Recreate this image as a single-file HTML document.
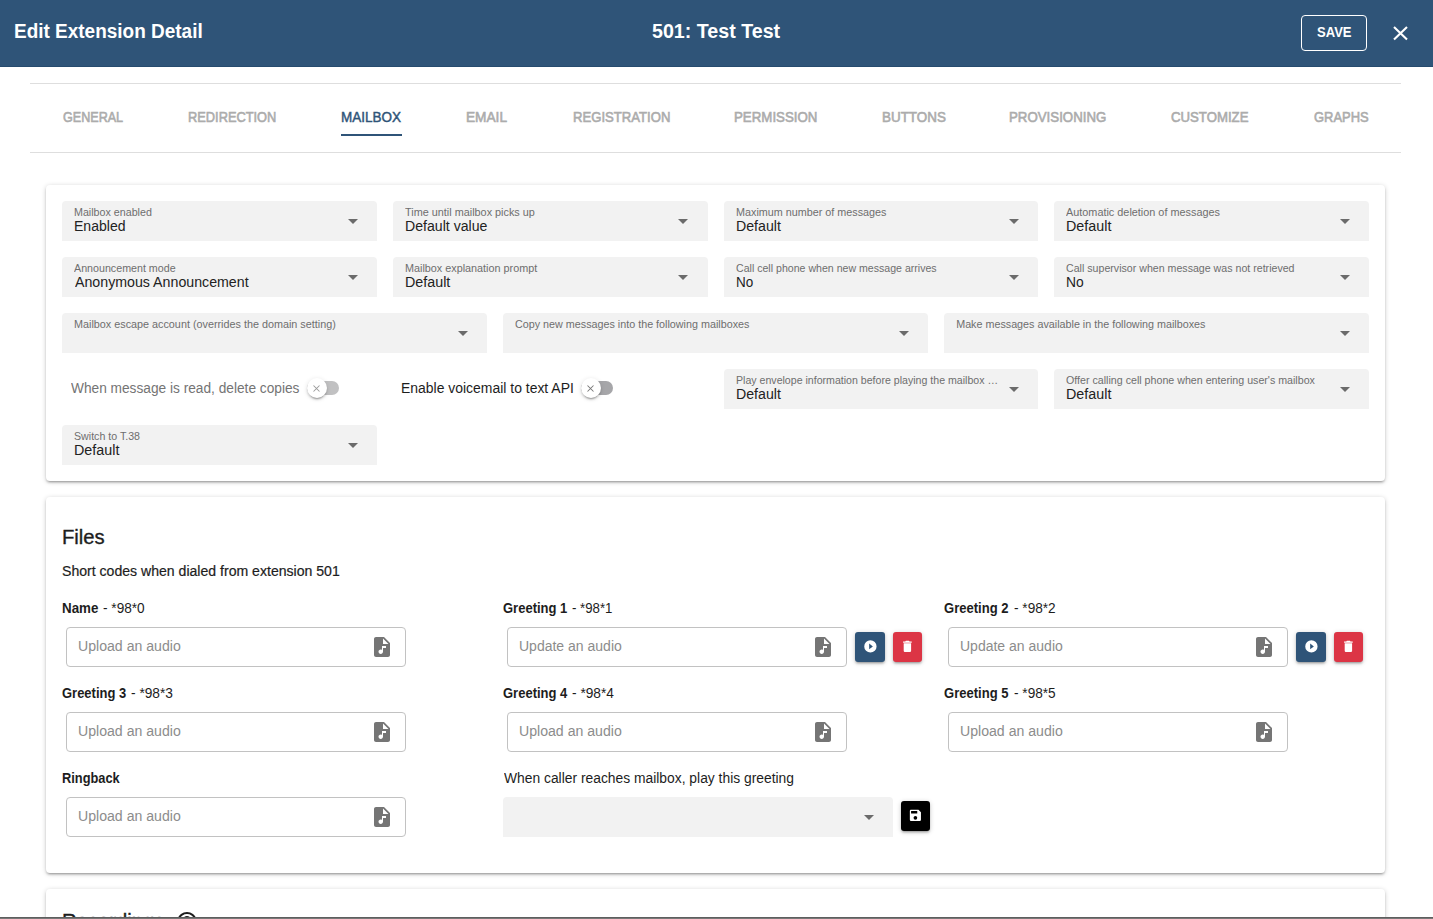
<!DOCTYPE html>
<html><head><meta charset="utf-8"><title>Edit Extension Detail</title>
<style>
*{box-sizing:border-box;margin:0;padding:0}
html,body{width:1433px;height:919px;overflow:hidden;background:#fff;font-family:"Liberation Sans",sans-serif}
#root{position:relative;width:1433px;height:919px;overflow:hidden;background:#fff}
.a{position:absolute}
.t{position:absolute;white-space:nowrap;transform-origin:0 0;font-family:"Liberation Sans",sans-serif}
.hdr{left:0;top:0;width:1433px;height:67px;background:#2f5478;border-bottom:1px solid #264b6e}
.save{left:1301px;top:15px;width:66px;height:36px;border:1px solid #fff;border-radius:4px}
.line{left:30px;width:1371px;height:1px;background:#dedede}
.ind{left:341px;top:134px;width:61px;height:2px;background:#2f5478}
.card{background:#fff;border-radius:4px;box-shadow:0 1px 5px rgba(0,0,0,.2),0 2px 2px rgba(0,0,0,.14),0 3px 1px -2px rgba(0,0,0,.12)}
.sel{height:40px;background:#f2f2f2;border-radius:4px 4px 0 0}
.arr{width:24px;height:24px}
.arr path{fill:#6b6b6b}
.inp{height:40px;border:1px solid #c2c2c2;border-radius:4px;background:#fff}
.fi{width:24px;height:24px}
.fi path{fill:#757575}
.btn{height:30px;border-radius:3px;box-shadow:0 1px 5px rgba(0,0,0,.2),0 2px 2px rgba(0,0,0,.14),0 3px 1px -2px rgba(0,0,0,.12)}
.btn svg{position:absolute;width:14.8px;height:14.8px;left:50%;top:50%;margin:-8.4px 0 0 -7.4px}
.btn path{fill:#fff}
.track{width:32px;height:14px;border-radius:7px}
.thumb{width:20px;height:20px;border-radius:50%;background:#fff;box-shadow:0 3px 1px -2px rgba(0,0,0,.2),0 2px 2px rgba(0,0,0,.14),0 1px 5px rgba(0,0,0,.12)}
.thumb svg{position:absolute;left:6.5px;top:6.5px;width:7px;height:7px}
</style></head><body><div id="root">
<!-- header -->
<div class="a hdr"></div>
<div class="a save"></div>
<svg class="a" style="left:1391px;top:24px;width:19px;height:19px" viewBox="0 0 19 19"><path d="M3 2.9 L16 15.5 M16 2.9 L3 15.5" stroke="#fff" stroke-width="2.1" fill="none"/></svg>
<!--HTEXTS-->
<!-- tabs -->
<div class="a line" style="top:83px"></div>
<div class="a line" style="top:152px"></div>
<div class="a ind"></div>

<!-- card 1 -->
<div class="a card" style="left:46px;top:185px;width:1339px;height:296px"></div>
<div class="a sel" style="left:62px;top:201px;width:314.75px"></div>
<svg class="a arr" style="left:340.55px;top:209.4px" viewBox="0 0 24 24"><path d="M7,10L12,15L17,10H7Z"/></svg>
<div class="a sel" style="left:392.75px;top:201px;width:314.75px"></div>
<svg class="a arr" style="left:671.3px;top:209.4px" viewBox="0 0 24 24"><path d="M7,10L12,15L17,10H7Z"/></svg>
<div class="a sel" style="left:723.5px;top:201px;width:314.75px"></div>
<svg class="a arr" style="left:1002.05px;top:209.4px" viewBox="0 0 24 24"><path d="M7,10L12,15L17,10H7Z"/></svg>
<div class="a sel" style="left:1054.25px;top:201px;width:314.75px"></div>
<svg class="a arr" style="left:1332.8px;top:209.4px" viewBox="0 0 24 24"><path d="M7,10L12,15L17,10H7Z"/></svg>
<div class="a sel" style="left:62px;top:257px;width:314.75px"></div>
<svg class="a arr" style="left:340.55px;top:265.4px" viewBox="0 0 24 24"><path d="M7,10L12,15L17,10H7Z"/></svg>
<div class="a sel" style="left:392.75px;top:257px;width:314.75px"></div>
<svg class="a arr" style="left:671.3px;top:265.4px" viewBox="0 0 24 24"><path d="M7,10L12,15L17,10H7Z"/></svg>
<div class="a sel" style="left:723.5px;top:257px;width:314.75px"></div>
<svg class="a arr" style="left:1002.05px;top:265.4px" viewBox="0 0 24 24"><path d="M7,10L12,15L17,10H7Z"/></svg>
<div class="a sel" style="left:1054.25px;top:257px;width:314.75px"></div>
<svg class="a arr" style="left:1332.8px;top:265.4px" viewBox="0 0 24 24"><path d="M7,10L12,15L17,10H7Z"/></svg>
<div class="a sel" style="left:62px;top:313px;width:425px"></div>
<svg class="a arr" style="left:450.8px;top:321.4px" viewBox="0 0 24 24"><path d="M7,10L12,15L17,10H7Z"/></svg>
<div class="a sel" style="left:503px;top:313px;width:425px"></div>
<svg class="a arr" style="left:891.8px;top:321.4px" viewBox="0 0 24 24"><path d="M7,10L12,15L17,10H7Z"/></svg>
<div class="a sel" style="left:944px;top:313px;width:425px"></div>
<svg class="a arr" style="left:1332.8px;top:321.4px" viewBox="0 0 24 24"><path d="M7,10L12,15L17,10H7Z"/></svg>
<div class="a sel" style="left:723.5px;top:369px;width:314.75px"></div>
<svg class="a arr" style="left:1002.05px;top:377.4px" viewBox="0 0 24 24"><path d="M7,10L12,15L17,10H7Z"/></svg>
<div class="a sel" style="left:1054.25px;top:369px;width:314.75px"></div>
<svg class="a arr" style="left:1332.8px;top:377.4px" viewBox="0 0 24 24"><path d="M7,10L12,15L17,10H7Z"/></svg>
<div class="a sel" style="left:62px;top:425px;width:314.75px"></div>
<svg class="a arr" style="left:340.55px;top:433.4px" viewBox="0 0 24 24"><path d="M7,10L12,15L17,10H7Z"/></svg>
<div class="a track" style="left:307px;top:381px;background:#c1c1c2"></div>
<div class="a thumb" style="left:306.8px;top:378.2px"><svg viewBox="0 0 7 7"><path d="M0.5 0.5L6.5 6.5M6.5 0.5L0.5 6.5" stroke="#9a9a9a" stroke-width="1.05" fill="none"/></svg></div>
<div class="a track" style="left:581px;top:381px;background:#a6a6a9"></div>
<div class="a thumb" style="left:580.8px;top:378.2px"><svg viewBox="0 0 7 7"><path d="M0.5 0.5L6.5 6.5M6.5 0.5L0.5 6.5" stroke="#777" stroke-width="1.05" fill="none"/></svg></div>
<!-- card 2 -->
<div class="a card" style="left:46px;top:497px;width:1339px;height:376px"></div>
<!-- card 3 -->
<div class="a card" style="left:46px;top:889px;width:1339px;height:200px"></div>
<div class="a inp" style="left:66px;top:627px;width:340px"></div>
<svg class="a fi" style="left:370px;top:635px" viewBox="0 0 24 24"><path d="M14 2H6c-1.1 0-2 .9-2 2v16c0 1.1.9 2 2 2h12c1.1 0 2-.9 2-2V8l-6-6zm2 11h-3v3.75c0 1.24-1.01 2.25-2.25 2.25S8.5 17.99 8.5 16.75s1.01-2.25 2.25-2.25c.46 0 .89.14 1.25.38V11h4v2zm-3-4V3.5L18.5 9H13z"/></svg>
<div class="a inp" style="left:507px;top:627px;width:340px"></div>
<svg class="a fi" style="left:811px;top:635px" viewBox="0 0 24 24"><path d="M14 2H6c-1.1 0-2 .9-2 2v16c0 1.1.9 2 2 2h12c1.1 0 2-.9 2-2V8l-6-6zm2 11h-3v3.75c0 1.24-1.01 2.25-2.25 2.25S8.5 17.99 8.5 16.75s1.01-2.25 2.25-2.25c.46 0 .89.14 1.25.38V11h4v2zm-3-4V3.5L18.5 9H13z"/></svg>
<div class="a inp" style="left:948px;top:627px;width:340px"></div>
<svg class="a fi" style="left:1252px;top:635px" viewBox="0 0 24 24"><path d="M14 2H6c-1.1 0-2 .9-2 2v16c0 1.1.9 2 2 2h12c1.1 0 2-.9 2-2V8l-6-6zm2 11h-3v3.75c0 1.24-1.01 2.25-2.25 2.25S8.5 17.99 8.5 16.75s1.01-2.25 2.25-2.25c.46 0 .89.14 1.25.38V11h4v2zm-3-4V3.5L18.5 9H13z"/></svg>
<div class="a inp" style="left:66px;top:712px;width:340px"></div>
<svg class="a fi" style="left:370px;top:720px" viewBox="0 0 24 24"><path d="M14 2H6c-1.1 0-2 .9-2 2v16c0 1.1.9 2 2 2h12c1.1 0 2-.9 2-2V8l-6-6zm2 11h-3v3.75c0 1.24-1.01 2.25-2.25 2.25S8.5 17.99 8.5 16.75s1.01-2.25 2.25-2.25c.46 0 .89.14 1.25.38V11h4v2zm-3-4V3.5L18.5 9H13z"/></svg>
<div class="a inp" style="left:507px;top:712px;width:340px"></div>
<svg class="a fi" style="left:811px;top:720px" viewBox="0 0 24 24"><path d="M14 2H6c-1.1 0-2 .9-2 2v16c0 1.1.9 2 2 2h12c1.1 0 2-.9 2-2V8l-6-6zm2 11h-3v3.75c0 1.24-1.01 2.25-2.25 2.25S8.5 17.99 8.5 16.75s1.01-2.25 2.25-2.25c.46 0 .89.14 1.25.38V11h4v2zm-3-4V3.5L18.5 9H13z"/></svg>
<div class="a inp" style="left:948px;top:712px;width:340px"></div>
<svg class="a fi" style="left:1252px;top:720px" viewBox="0 0 24 24"><path d="M14 2H6c-1.1 0-2 .9-2 2v16c0 1.1.9 2 2 2h12c1.1 0 2-.9 2-2V8l-6-6zm2 11h-3v3.75c0 1.24-1.01 2.25-2.25 2.25S8.5 17.99 8.5 16.75s1.01-2.25 2.25-2.25c.46 0 .89.14 1.25.38V11h4v2zm-3-4V3.5L18.5 9H13z"/></svg>
<div class="a inp" style="left:66px;top:797px;width:340px"></div>
<svg class="a fi" style="left:370px;top:805px" viewBox="0 0 24 24"><path d="M14 2H6c-1.1 0-2 .9-2 2v16c0 1.1.9 2 2 2h12c1.1 0 2-.9 2-2V8l-6-6zm2 11h-3v3.75c0 1.24-1.01 2.25-2.25 2.25S8.5 17.99 8.5 16.75s1.01-2.25 2.25-2.25c.46 0 .89.14 1.25.38V11h4v2zm-3-4V3.5L18.5 9H13z"/></svg>
<div class="a btn" style="left:855px;top:632px;width:30px;background:#2f5478"><svg viewBox="0 0 24 24"><path d="M10,16.5V7.5L16,12M12,2A10,10 0 0,0 2,12A10,10 0 0,0 12,22A10,10 0 0,0 22,12A10,10 0 0,0 12,2Z"/></svg></div>
<div class="a btn" style="left:1296px;top:632px;width:30px;background:#2f5478"><svg viewBox="0 0 24 24"><path d="M10,16.5V7.5L16,12M12,2A10,10 0 0,0 2,12A10,10 0 0,0 12,22A10,10 0 0,0 22,12A10,10 0 0,0 12,2Z"/></svg></div>
<div class="a btn" style="left:893px;top:632px;width:29px;background:#dc3545"><svg viewBox="0 0 24 24"><path d="M19,4H15.5L14.5,3H9.5L8.5,4H5V6H19M6,19A2,2 0 0,0 8,21H16A2,2 0 0,0 18,19V7H6V19Z"/></svg></div>
<div class="a btn" style="left:1334px;top:632px;width:29px;background:#dc3545"><svg viewBox="0 0 24 24"><path d="M19,4H15.5L14.5,3H9.5L8.5,4H5V6H19M6,19A2,2 0 0,0 8,21H16A2,2 0 0,0 18,19V7H6V19Z"/></svg></div>
<div class="a sel" style="left:503px;top:797px;width:390px"></div>
<svg class="a arr" style="left:856.8px;top:805.2px" viewBox="0 0 24 24"><path d="M7,10L12,15L17,10H7Z"/></svg>
<div class="a btn" style="left:901px;top:801px;width:29px;background:#000"><svg viewBox="0 0 24 24"><path d="M15,9H5V5H15M12,19A3,3 0 0,1 9,16A3,3 0 0,1 12,13A3,3 0 0,1 15,16A3,3 0 0,1 12,19M17,3H5C3.89,3 3,3.9 3,5V19A2,2 0 0,0 5,21H19A2,2 0 0,0 21,19V7L17,3Z"/></svg></div>
<svg class="a" style="left:174.9px;top:910.4px;width:24px;height:24px" viewBox="0 0 24 24"><path fill="#1d1d1d" d="M11 18h2v-2h-2v2zm1-16C6.48 2 2 6.48 2 12s4.48 10 10 10 10-4.48 10-10S17.52 2 12 2zm0 18c-4.41 0-8-3.59-8-8s3.59-8 8-8 8 3.59 8 8-3.59 8-8 8zm0-14c-2.21 0-4 1.79-4 4h2c0-1.1.9-2 2-2s2 .9 2 2c0 2-3 1.75-3 5h2c0-2.25 3-2.5 3-5 0-2.21-1.79-4-4-4z"/></svg>

<div class="t" style="left:13.85px;top:21.27px;font-size:20px;line-height:20px;transform:scaleX(0.9485);color:#fff;font-weight:bold;">Edit Extension Detail</div>
<div class="t" style="left:651.80px;top:21.17px;font-size:20px;line-height:20px;transform:scaleX(0.9827);color:#fff;font-weight:bold;">501: Test Test</div>
<div class="t" style="left:1317.10px;top:25.15px;font-size:14px;line-height:14px;transform:scaleX(0.9307);color:#fff;font-weight:bold;">SAVE</div>
<div class="t" style="left:62.70px;top:110.05px;font-size:14px;line-height:14px;transform:scaleX(0.8983);color:#acacac;-webkit-text-stroke:0.6px;">GENERAL</div>
<div class="t" style="left:188.48px;top:110.05px;font-size:14px;line-height:14px;transform:scaleX(0.9159);color:#acacac;-webkit-text-stroke:0.6px;">REDIRECTION</div>
<div class="t" style="left:340.84px;top:110.05px;font-size:14px;line-height:14px;transform:scaleX(0.9628);color:#2f5478;-webkit-text-stroke:0.45px;">MAILBOX</div>
<div class="t" style="left:466.42px;top:110.05px;font-size:14px;line-height:14px;transform:scaleX(0.9751);color:#acacac;-webkit-text-stroke:0.6px;">EMAIL</div>
<div class="t" style="left:572.56px;top:110.05px;font-size:14px;line-height:14px;transform:scaleX(0.9366);color:#acacac;-webkit-text-stroke:0.6px;">REGISTRATION</div>
<div class="t" style="left:734.35px;top:110.05px;font-size:14px;line-height:14px;transform:scaleX(0.9488);color:#acacac;-webkit-text-stroke:0.6px;">PERMISSION</div>
<div class="t" style="left:881.74px;top:110.05px;font-size:14px;line-height:14px;transform:scaleX(0.9587);color:#acacac;-webkit-text-stroke:0.6px;">BUTTONS</div>
<div class="t" style="left:1009.35px;top:110.05px;font-size:14px;line-height:14px;transform:scaleX(0.9475);color:#acacac;-webkit-text-stroke:0.6px;">PROVISIONING</div>
<div class="t" style="left:1171.10px;top:110.05px;font-size:14px;line-height:14px;transform:scaleX(0.9420);color:#acacac;-webkit-text-stroke:0.6px;">CUSTOMIZE</div>
<div class="t" style="left:1313.80px;top:110.05px;font-size:14px;line-height:14px;transform:scaleX(0.9237);color:#acacac;-webkit-text-stroke:0.6px;">GRAPHS</div>
<div class="t" style="left:74.20px;top:207.00px;font-size:10.75px;line-height:10.75px;transform:scaleX(0.9948);color:#6e6e6e;">Mailbox enabled</div>
<div class="t" style="left:74.10px;top:218.95px;font-size:14px;line-height:14px;transform:scaleX(1.0022);color:#222222;">Enabled</div>
<div class="t" style="left:405.20px;top:207.00px;font-size:10.75px;line-height:10.75px;transform:scaleX(1.0096);color:#6e6e6e;">Time until mailbox picks up</div>
<div class="t" style="left:405.09px;top:218.95px;font-size:14px;line-height:14px;transform:scaleX(1.0083);color:#222222;">Default value</div>
<div class="t" style="left:736.20px;top:207.00px;font-size:10.75px;line-height:10.75px;transform:scaleX(1.0035);color:#6e6e6e;">Maximum number of messages</div>
<div class="t" style="left:736.09px;top:218.95px;font-size:14px;line-height:14px;transform:scaleX(1.0122);color:#222222;">Default</div>
<div class="t" style="left:1066.45px;top:207.00px;font-size:10.75px;line-height:10.75px;transform:scaleX(1.0102);color:#6e6e6e;">Automatic deletion of messages</div>
<div class="t" style="left:1066.33px;top:218.95px;font-size:14px;line-height:14px;transform:scaleX(1.0226);color:#222222;">Default</div>
<div class="t" style="left:74.20px;top:263.00px;font-size:10.75px;line-height:10.75px;transform:scaleX(0.9940);color:#6e6e6e;">Announcement mode</div>
<div class="t" style="left:75.10px;top:274.95px;font-size:14px;line-height:14px;transform:scaleX(1.0139);color:#222222;">Anonymous Announcement</div>
<div class="t" style="left:405.20px;top:263.00px;font-size:10.75px;line-height:10.75px;transform:scaleX(1.0055);color:#6e6e6e;">Mailbox explanation prompt</div>
<div class="t" style="left:405.08px;top:274.95px;font-size:14px;line-height:14px;transform:scaleX(1.0214);color:#222222;">Default</div>
<div class="t" style="left:736.20px;top:263.00px;font-size:10.75px;line-height:10.75px;transform:scaleX(0.9848);color:#6e6e6e;">Call cell phone when new message arrives</div>
<div class="t" style="left:736.14px;top:274.95px;font-size:14px;line-height:14px;transform:scaleX(0.9643);color:#222222;">No</div>
<div class="t" style="left:1066.45px;top:263.00px;font-size:10.75px;line-height:10.75px;transform:scaleX(0.9883);color:#6e6e6e;">Call supervisor when message was not retrieved</div>
<div class="t" style="left:1066.36px;top:274.95px;font-size:14px;line-height:14px;transform:scaleX(0.9906);color:#222222;">No</div>
<div class="t" style="left:74.20px;top:319.00px;font-size:10.75px;line-height:10.75px;transform:scaleX(1.0048);color:#6e6e6e;">Mailbox escape account (overrides the domain setting)</div>
<div class="t" style="left:515.20px;top:319.00px;font-size:10.75px;line-height:10.75px;transform:scaleX(1.0006);color:#6e6e6e;">Copy new messages into the following mailboxes</div>
<div class="t" style="left:956.20px;top:319.00px;font-size:10.75px;line-height:10.75px;transform:scaleX(1.0000);color:#6e6e6e;">Make messages available in the following mailboxes</div>
<div class="t" style="left:736.20px;top:375.00px;font-size:10.75px;line-height:10.75px;transform:scaleX(0.9854);color:#6e6e6e;">Play envelope information before playing the mailbox …</div>
<div class="t" style="left:736.09px;top:386.95px;font-size:14px;line-height:14px;transform:scaleX(1.0122);color:#222222;">Default</div>
<div class="t" style="left:1066.45px;top:375.00px;font-size:10.75px;line-height:10.75px;transform:scaleX(0.9916);color:#6e6e6e;">Offer calling cell phone when entering user's mailbox</div>
<div class="t" style="left:1066.33px;top:386.95px;font-size:14px;line-height:14px;transform:scaleX(1.0226);color:#222222;">Default</div>
<div class="t" style="left:74.20px;top:431.00px;font-size:10.75px;line-height:10.75px;transform:scaleX(0.9889);color:#6e6e6e;">Switch to T.38</div>
<div class="t" style="left:74.08px;top:442.95px;font-size:14px;line-height:14px;transform:scaleX(1.0237);color:#222222;">Default</div>
<div class="t" style="left:70.50px;top:381.15px;font-size:14px;line-height:14px;transform:scaleX(0.9783);color:#747474;">When message is read, delete copies</div>
<div class="t" style="left:400.60px;top:381.15px;font-size:14px;line-height:14px;transform:scaleX(0.9958);color:#1d1d1d;">Enable voicemail to text API</div>
<div class="t" style="left:62.19px;top:527.47px;font-size:20px;line-height:20px;transform:scaleX(1.0115);color:#1d1d1d;-webkit-text-stroke:0.35px;">Files</div>
<div class="t" style="left:62.20px;top:564.35px;font-size:14px;line-height:14px;transform:scaleX(1.0054);color:#1d1d1d;-webkit-text-stroke:0.2px;">Short codes when dialed from extension 501</div>
<div class="t" style="left:62.30px;top:600.95px;font-size:14px;line-height:14px;transform:scaleX(0.9545);color:#1d1d1d;font-weight:bold;">Name</div>
<div class="t" style="left:103.40px;top:600.95px;font-size:14px;line-height:14px;transform:scaleX(0.9740);color:#1d1d1d;">- *98*0</div>
<div class="t" style="left:503.30px;top:600.95px;font-size:14px;line-height:14px;transform:scaleX(0.9287);color:#1d1d1d;font-weight:bold;">Greeting 1</div>
<div class="t" style="left:572.30px;top:600.95px;font-size:14px;line-height:14px;transform:scaleX(0.9437);color:#1d1d1d;">- *98*1</div>
<div class="t" style="left:944.30px;top:600.95px;font-size:14px;line-height:14px;transform:scaleX(0.9315);color:#1d1d1d;font-weight:bold;">Greeting 2</div>
<div class="t" style="left:1013.50px;top:600.95px;font-size:14px;line-height:14px;transform:scaleX(0.9740);color:#1d1d1d;">- *98*2</div>
<div class="t" style="left:62.30px;top:686.05px;font-size:14px;line-height:14px;transform:scaleX(0.9272);color:#1d1d1d;font-weight:bold;">Greeting 3</div>
<div class="t" style="left:131.20px;top:686.05px;font-size:14px;line-height:14px;transform:scaleX(0.9809);color:#1d1d1d;">- *98*3</div>
<div class="t" style="left:503.30px;top:686.05px;font-size:14px;line-height:14px;transform:scaleX(0.9287);color:#1d1d1d;font-weight:bold;">Greeting 4</div>
<div class="t" style="left:572.30px;top:686.05px;font-size:14px;line-height:14px;transform:scaleX(0.9809);color:#1d1d1d;">- *98*4</div>
<div class="t" style="left:944.30px;top:686.05px;font-size:14px;line-height:14px;transform:scaleX(0.9315);color:#1d1d1d;font-weight:bold;">Greeting 5</div>
<div class="t" style="left:1013.50px;top:686.05px;font-size:14px;line-height:14px;transform:scaleX(0.9740);color:#1d1d1d;">- *98*5</div>
<div class="t" style="left:62.30px;top:770.65px;font-size:14px;line-height:14px;transform:scaleX(0.9157);color:#1d1d1d;font-weight:bold;">Ringback</div>
<div class="t" style="left:503.60px;top:771.45px;font-size:14px;line-height:14px;transform:scaleX(0.9885);color:#1d1d1d;">When caller reaches mailbox, play this greeting</div>
<div class="t" style="left:78.09px;top:639.35px;font-size:14px;line-height:14px;transform:scaleX(1.0080);color:#8c8c8c;">Upload an audio</div>
<div class="t" style="left:519.10px;top:639.35px;font-size:14px;line-height:14px;transform:scaleX(1.0003);color:#8c8c8c;">Update an audio</div>
<div class="t" style="left:960.10px;top:639.35px;font-size:14px;line-height:14px;transform:scaleX(1.0003);color:#8c8c8c;">Update an audio</div>
<div class="t" style="left:78.09px;top:724.35px;font-size:14px;line-height:14px;transform:scaleX(1.0080);color:#8c8c8c;">Upload an audio</div>
<div class="t" style="left:519.09px;top:724.35px;font-size:14px;line-height:14px;transform:scaleX(1.0080);color:#8c8c8c;">Upload an audio</div>
<div class="t" style="left:960.09px;top:724.35px;font-size:14px;line-height:14px;transform:scaleX(1.0080);color:#8c8c8c;">Upload an audio</div>
<div class="t" style="left:78.09px;top:809.35px;font-size:14px;line-height:14px;transform:scaleX(1.0080);color:#8c8c8c;">Upload an audio</div>
<div class="t" style="left:62.19px;top:911.47px;font-size:20px;line-height:20px;transform:scaleX(1.0114);color:#1d1d1d;-webkit-text-stroke:0.35px;">Recordings</div>

<!-- bottom bar -->
<div class="a" style="left:0;top:917px;width:1433px;height:1px;background:#5e5e5e"></div>
<div class="a" style="left:0;top:918px;width:1433px;height:1px;background:#787878"></div>
</div></body></html>
